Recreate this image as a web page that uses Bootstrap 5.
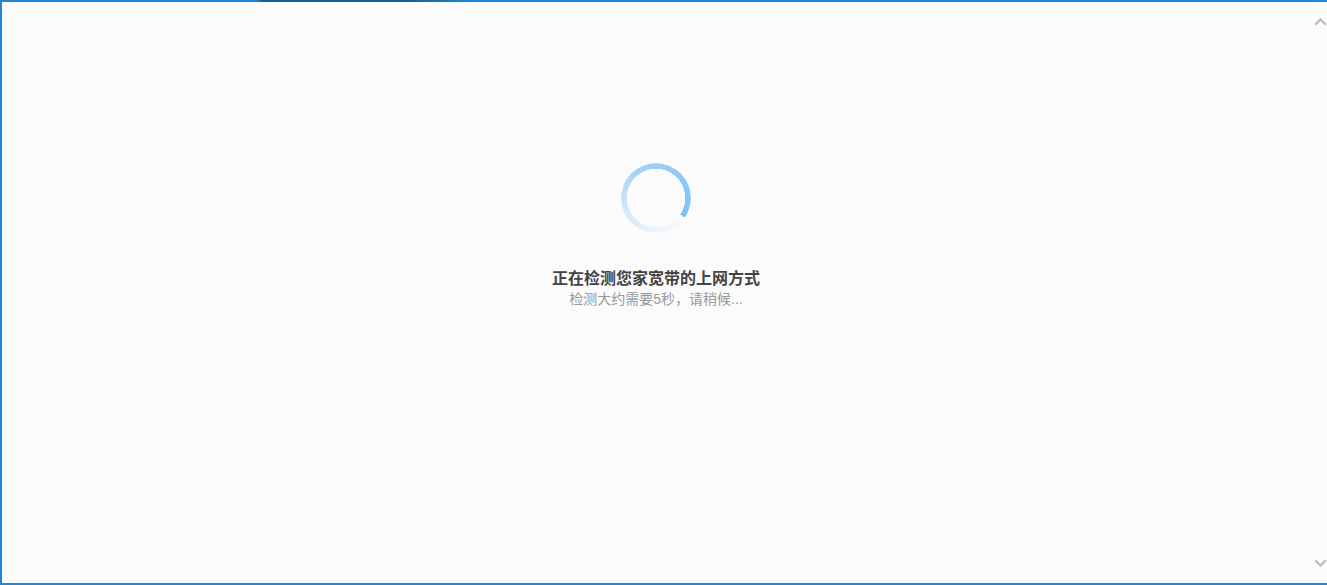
<!DOCTYPE html>
<html lang="zh-CN">
<head>
<meta charset="utf-8">
<title>正在检测</title>
<link href="https://cdn.jsdelivr.net/npm/bootstrap@5.3.0/dist/css/bootstrap.min.css" rel="stylesheet">
<style>
html,body{height:100%;margin:0;overflow:hidden;background:#fbfbfc}
body{font-family:"Liberation Sans","Noto Sans CJK SC",sans-serif}
.frame-box{height:585px;border-top:2px solid #2087d8;border-left:2px solid #2087d8;border-bottom:2px solid #2087d8;background:#fbfbfc;position:relative}
.top-shine{position:absolute;top:-2px;left:254px;width:216px;height:2px;background:linear-gradient(90deg,#2087d8,#0f6299 3%,#0f6299 70%,#2087d8)}
.main-pane{padding-top:161px}
.ring{width:70px;height:70px;border-radius:50%;background:conic-gradient(from 124deg,rgba(124,195,248,0) 0deg,rgba(124,195,248,.12) 55deg,#d3e7f8 125deg,#a5d2f6 200deg,#7cc3f8 360deg);-webkit-mask:radial-gradient(circle,transparent 29px,#000 29.5px);mask:radial-gradient(circle,transparent 29px,#000 29.5px)}
.title-txt{font-size:16px;font-weight:700;color:#444;line-height:20px;margin-top:36px}
.sub-txt{font-size:14px;color:#999;line-height:20px}
.scroll-rail{width:17px;background:#fcfcfc;padding:14.5px 0 15.5px 3px}
.scroll-rail svg{display:block}
</style>
</head>
<body>
<div class="frame-box d-flex">
  <div class="top-shine"></div>
  <div class="main-pane flex-grow-1 d-flex flex-column align-items-center">
    <div class="ring"></div>
    <div class="title-txt">正在检测您家宽带的上网方式</div>
    <div class="sub-txt">检测大约需要5秒，请稍候...</div>
  </div>
  <div class="scroll-rail d-flex flex-column justify-content-between align-items-center">
    <svg width="13" height="9" viewBox="0 0 13 9"><path d="M1.2 7.7 6.5 2.4l5.3 5.3" fill="none" stroke="#bdbdbd" stroke-width="2.2"/></svg>
    <svg width="13" height="9" viewBox="0 0 13 9"><path d="M1.2 1.3l5.3 5.3 5.3-5.3" fill="none" stroke="#bdbdbd" stroke-width="2.2"/></svg>
  </div>
</div>
<script src="https://cdn.jsdelivr.net/npm/bootstrap@5.3.0/dist/js/bootstrap.bundle.min.js"></script>
</body>
</html>
